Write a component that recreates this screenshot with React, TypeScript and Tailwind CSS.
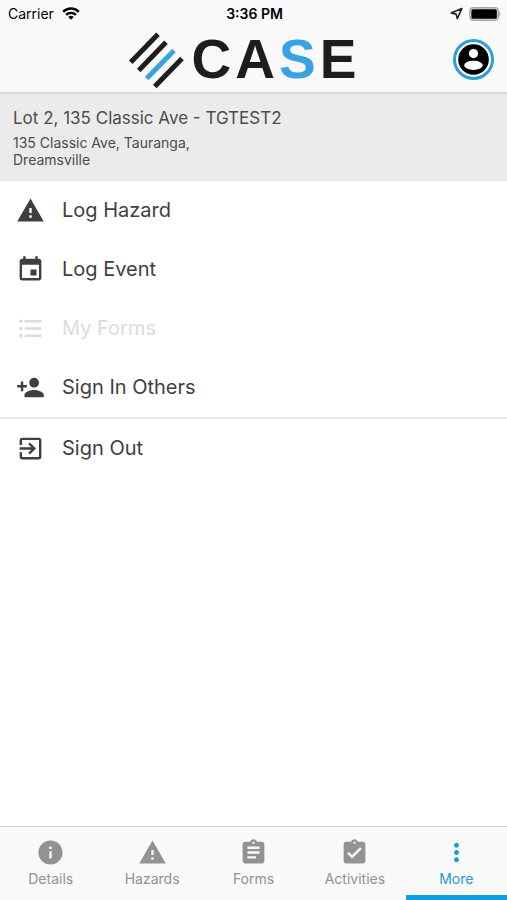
import type { IconType } from "react-icons"
import {
  MdAssignment,
  MdAssignmentTurnedIn,
  MdEvent,
  MdExitToApp,
  MdFormatListBulleted,
  MdInfo,
  MdMoreVert,
  MdPersonAdd,
  MdWarning,
} from "react-icons/md"
import clsx from "clsx"

interface Item {
  label: string
  icon: IconType
  disabled?: boolean
}

const menuItems: Item[] = [
  { label: "Log Hazard", icon: MdWarning },
  { label: "Log Event", icon: MdEvent },
  { label: "My Forms", icon: MdFormatListBulleted, disabled: true },
  { label: "Sign In Others", icon: MdPersonAdd },
]

const tabs: Item[] = [
  { label: "Details", icon: MdInfo },
  { label: "Hazards", icon: MdWarning },
  { label: "Forms", icon: MdAssignment },
  { label: "Activities", icon: MdAssignmentTurnedIn },
  { label: "More", icon: MdMoreVert },
]

function StatusBar() {
  return (
    <div className="flex h-[27px] items-center pl-2 pr-1.5 text-sm text-black">
      <div className="flex flex-1 items-center gap-2">
        <span>Carrier</span>
        <svg viewBox="0 0 18 13" className="h-[13px] w-[18px]" fill="none" stroke="currentColor" strokeWidth="2.4">
          <path d="M1.2 4.8a11 11 0 0 1 15.6 0" />
          <path d="M4.1 7.9a6.9 6.9 0 0 1 9.8 0" />
          <path d="M9 12.8 6.3 10.1a3.8 3.8 0 0 1 5.4 0z" fill="currentColor" stroke="none" />
        </svg>
      </div>
      <span className="font-semibold">3:36 PM</span>
      <div className="flex flex-1 items-center justify-end gap-1.5">
        <svg viewBox="0 0 13 13" className="size-[13px]" fill="none" stroke="#222" strokeWidth="1.6" strokeLinejoin="round">
          <path d="M11.8 1.6 1.2 5.9l4.9 1.2 1.2 4.5z" />
        </svg>
        <svg viewBox="0 0 32 14" className="h-[14px] w-8">
          <rect x="0.9" y="0.8" width="28.4" height="12.4" rx="3.4" fill="#ddd" stroke="#a8a8a8" strokeWidth="1.4" />
          <rect x="2.4" y="2.2" width="25.4" height="9.6" rx="1.6" />
          <path d="M30.2 4.8c1.5.4 1.5 4 0 4.4z" fill="#a8a8a8" />
        </svg>
      </div>
    </div>
  )
}

function Logo() {
  return (
    <div className="mr-2.5 flex items-center gap-2">
      <svg viewBox="0 0 56 58" className="h-[58px] w-14" fill="none" stroke="#1d1d1d" strokeWidth="5">
        <path d="M2.7 31.3 30 3.2" />
        <path d="M10.7 39.4 38 11.3" />
        <path d="M18.7 47.5 46 19.4" stroke="#38a3e2" />
        <path d="M26.8 55.6 54 27.5" />
      </svg>
      <h1 className="flex gap-1 font-['Liberation_Sans',sans-serif] text-[55px] leading-none font-bold text-[#1d1d1d]">
        <span>C</span>
        <span>A</span>
        <span className="text-[#38a3e2]">S</span>
        <span>E</span>
      </h1>
    </div>
  )
}

function MenuRow({ label, icon: Icon, disabled }: Item) {
  return (
    <button
      disabled={disabled}
      className="flex h-[59px] w-full items-center gap-[17px] px-4 text-left text-xl text-[#3f3f3f] disabled:text-[#dcdcdc]"
    >
      <Icon className="size-[29px] shrink-0" />
      <span className="pb-0.5">{label}</span>
    </button>
  )
}

export default function App() {
  return (
    <div className="flex min-h-screen flex-col bg-white font-['Inter',sans-serif]">
      <header className="border-b-2 border-[#dcdcdc] bg-[#f9f9f9]">
        <StatusBar />
        <div className="grid h-[65px] grid-cols-[1fr_auto_1fr] items-center pr-[13px]">
          <div />
          <Logo />
          <button
            aria-label="Account"
            className="flex size-[41px] items-center justify-center justify-self-end rounded-full border-3 border-[#2ba0da] bg-white"
          >
            <svg viewBox="0 0 31 31" className="size-[31px]">
              <circle cx="15.5" cy="15.5" r="15.3" />
              <circle cx="15.5" cy="9.6" r="4.6" fill="#fff" />
              <ellipse cx="15.5" cy="21.3" rx="9.3" ry="4.6" fill="#fff" />
            </svg>
          </button>
        </div>
      </header>

      <section className="bg-[#ebebeb] px-[13px] pt-3 pb-[13px] text-[#4c4c4c]">
        <h2 className="text-[17px] leading-6">Lot 2, 135 Classic Ave - TGTEST2</h2>
        <p className="mt-1 text-sm leading-[17px]">
          135 Classic Ave, Tauranga,
          <br />
          Dreamsville
        </p>
      </section>

      <main className="flex-1">
        {menuItems.map((item) => (
          <MenuRow key={item.label} {...item} />
        ))}
        <hr className="border-t-2 border-[#e8e8e8]" />
        <MenuRow label="Sign Out" icon={MdExitToApp} />
      </main>

      <nav className="flex border-t border-[#d8d8d8] bg-[#f9f9f9]">
        {tabs.map(({ label, icon: Icon }) => {
          const active = label === "More"
          return (
            <button
              key={label}
              className={clsx(
                "flex flex-1 basis-0 flex-col items-center gap-0.5 border-b-5 pt-[11px] pb-1.5 text-sm leading-5",
                active ? "border-[#0f9fe5] text-[#1c9ad6]" : "border-transparent text-[#929292]"
              )}
            >
              <Icon className="size-[29px]" />
              {label}
            </button>
          )
        })}
      </nav>
    </div>
  )
}
